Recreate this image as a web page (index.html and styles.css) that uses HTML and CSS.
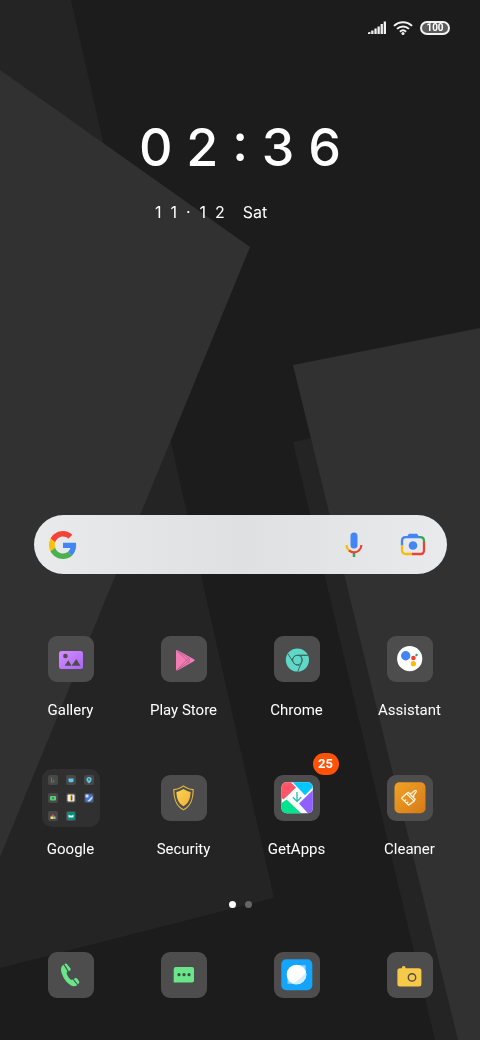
FILE: index.html
```html
<!DOCTYPE html>
<html lang="en">
<head>
    <meta charset="UTF-8">
    <meta name="viewport" content="width=device-width, initial-scale=1.0">
    <title>Home Screen</title>
    <link rel="stylesheet" href="styles.css">
</head>
<body>
    <!-- Wallpaper -->
    <svg class="wallpaper" viewBox="0 0 480 1040" preserveAspectRatio="none" aria-hidden="true">
        <rect width="480" height="1040" fill="#1c1c1c"/>
        <polygon points="0,0 71,0 274,898 0,968" fill="#242424"/>
        <polygon points="0,70 250,247 0,857" fill="#313131"/>
        <polygon points="293,442 480,402 480,1040 435,1040" fill="#242424"/>
        <polygon points="293,365 480,328 480,1040 458,1040" fill="#313131"/>
    </svg>

    <div class="screen">
        <header class="status-bar">
            <svg width="18" height="14" viewBox="0 0 18 14" fill="#f2f2f2" role="img" aria-label="Signal">
                <path d="M0 11.500l2.400-.8V13H0zM3.200 9.600h2.300V13H3.200zM6.400 7.600h2.300V13H6.400zM9.500 5.400h2.300V13H9.500zM12.600 3h2.300v10h-2.300zM15.700 0.400H18V13h-2.300z"/>
            </svg>
            <svg width="20" height="14" viewBox="0 0 20 14" fill="none" stroke="#f2f2f2" stroke-width="2" role="img" aria-label="Wi-Fi">
                <path d="M1 4.900C6-.1 14-.1 19 4.900M4 7.900c3.400-3.300 8.600-3.300 12 0M6.900 10.700c1.800-1.600 4.400-1.600 6.200 0"/>
                <circle cx="10" cy="12.400" r="1.500" fill="#f2f2f2" stroke="none"/>
            </svg>
            <span class="battery">100</span>
        </header>

        <section class="clock-widget">
            <div class="clock">
                <time class="time">0 2 : 3 6</time>
                <div class="date">1&nbsp; 1 &nbsp;· &nbsp;1&nbsp; 2 &nbsp; &nbsp;Sat</div>
            </div>
        </section>

        <form class="search">
            <svg class="google" width="28" height="28" viewBox="0 0 48 48" aria-hidden="true">
                <path fill="#4285f4" d="M46.500 24.500c0-1.600-.100-3.100-.400-4.500H24v9h12.700c-.600 2.900-2.300 5.400-4.700 7.100l7.500 5.800c4.400-4.100 7-10.100 7-17.400z"/>
                <path fill="#f44336" d="M24 9.500c3.500 0 6.700 1.200 9.200 3.600l6.800-6.800C35.900 2.400 30.500 0 24 0 14.600 0 6.500 5.400 2.600 13.200l8 6.200C12.400 13.700 17.700 9.500 24 9.500z"/>
                <path fill="#ffc107" d="M10.500 28.600c-.500-1.500-.800-3-.800-4.600s.300-3.100.800-4.600l-8-6.200C.900 16.500 0 20.100 0 24s.900 7.500 2.600 10.800z"/>
                <path fill="#4caf50" d="M24 48c6.500 0 11.900-2.100 15.900-5.800l-7.700-6c-2.200 1.500-5 2.300-8.200 2.300-6.300 0-11.600-4.200-13.500-9.900l-8 6.200C6.500 42.600 14.600 48 24 48z"/>
            </svg>
            <input type="text" class="search-input" name="q" aria-label="Search">
            <button type="button" class="search-button" aria-label="Voice search">
                <svg width="28" height="28" viewBox="0 0 28 28" fill="none" stroke-width="2.200">
                    <rect x="10.500" y="1.500" width="7" height="16" rx="3.500" fill="#4285f4"/>
                    <path d="M14 21.500V26" stroke="#34a853" stroke-width="2.500"/>
                    <path d="M6.600 14c0 2.400 1.100 4.300 2.700 5.600" stroke="#fbbc04"/>
                    <path d="M9 19.400c3 2.600 7.300 2.500 9.900.100 1.600-1.400 2.500-3.200 2.500-5.500" stroke="#ea4335"/>
                </svg>
            </button>
            <button type="button" class="search-button" aria-label="Search with camera">
                <svg width="28" height="28" viewBox="0 0 28 28" fill="none" stroke-width="2.300">
                    <path d="M8 5.500l2-2.800h8l2 2.800z" fill="#4285f4"/>
                    <path d="M3 14.500V10c0-2.200 1.600-3.800 3.800-3.800H20" stroke="#4285f4"/>
                    <path d="M20 6.200h1.200c2.200 0 3.800 1.600 3.800 3.800v1" stroke="#34a853"/>
                    <path d="M25 11v8.200c0 2.200-1.600 3.800-3.800 3.800H13" stroke="#ea4335"/>
                    <path d="M13 23H6.800C4.600 23 3 21.400 3 19.200v-4.700" stroke="#fbbc04"/>
                    <circle cx="14" cy="14.500" r="4.300" fill="#4285f4"/>
                </svg>
            </button>
        </form>

        <main class="apps">
            <a href="#" class="app">
                <span class="tile">
                    <svg viewBox="0 0 46 46">
                        <defs>
                            <linearGradient id="violet" x1="0" y1="0" x2="1" y2="1"><stop offset="0" stop-color="#d58cff"/><stop offset="1" stop-color="#aa66f5"/></linearGradient>
                        </defs>
                        <rect x="11" y="15" width="24" height="18" rx="2.500" fill="url(#violet)"/>
                        <circle cx="17.400" cy="20" r="2.300" fill="#4d4d4d"/>
                        <path d="M16.600 29.800l3.700-5.500 3.300 5.500zM23.600 29.800l4.700-6.800 4.100 6.800z" fill="#4d4d4d"/>
                    </svg>
                </span>
                <span class="label">Gallery</span>
            </a>
            <a href="#" class="app">
                <span class="tile">
                    <svg viewBox="0 0 46 46">
                        <path d="M15 15.200c0-1.200.9-1.600 1.900-1l16 9.100c1 .6 1 1.400 0 2l-16 9c-1 .6-1.900.2-1.900-1z" fill="#f27cb5"/>
                        <path d="M16 14.500l12.500 12.800M16 34l12.500-12.800M16 14.300l11.500 8c1.200.9 1.200 2.900 0 3.800l-11.500 7.900" fill="none" stroke="#9b5479" stroke-width=".6"/>
                    </svg>
                </span>
                <span class="label">Play Store</span>
            </a>
            <a href="#" class="app">
                <span class="tile">
                    <svg viewBox="0 0 46 46">
                        <circle cx="23.400" cy="24" r="11.600" fill="#60d8c8"/>
                        <g fill="none" stroke="#3f6762" stroke-width="1">
                            <circle cx="23.400" cy="24" r="4.700"/>
                            <path d="M34 19.300H23.400M13.800 17.600l5.500 8.800M23.700 35.500l3.900-9.100M23.400 19.300c-3 0-5 2.400-5 5M33.800 19.300h-6c-1.500 0-2.700.1-4.400 0M27.600 26.400c1-2.700.4-5-1.200-7.100M19.300 26.400c1.400 2.200 3.500 3.100 6.200 2.900"/>
                        </g>
                    </svg>
                </span>
                <span class="label">Chrome</span>
            </a>
            <a href="#" class="app">
                <span class="tile">
                    <svg viewBox="0 0 46 46">
                        <circle cx="22.700" cy="22.700" r="12.600" fill="#fff"/>
                        <circle cx="18.700" cy="19.700" r="4.700" fill="#4285f4"/>
                        <circle cx="26.400" cy="22" r="2.300" fill="#ea4335"/>
                        <circle cx="29.500" cy="19" r="1.200" fill="#34a853"/>
                        <circle cx="26.400" cy="27.700" r="2.600" fill="#fbbc04"/>
                    </svg>
                </span>
                <span class="label">Assistant</span>
            </a>

            <a href="#" class="app">
                <span class="folder">
                    <svg viewBox="0 0 10 10"><path d="M3.500 2.500v4.800h1.300a1.200 1.200 0 0 0 0-2.400" fill="none" stroke="#4b8a5a"/></svg>
                    <svg viewBox="0 0 10 10"><path d="M2.500 3.500h5v2.300a1.500 1.500 0 0 1-1.500 1.500H4a1.500 1.500 0 0 1-1.500-1.500z" fill="#5cc8e8"/></svg>
                    <svg viewBox="0 0 10 10"><path d="M5 8.500C3.500 7 2.400 5.800 2.400 4.500a2.600 2.600 0 0 1 5.200 0C7.600 5.800 6.500 7 5 8.500z" fill="#5cc8e8"/><circle cx="5" cy="4.500" r=".9" fill="#36546a"/></svg>
                    <svg viewBox="0 0 10 10"><rect x="2" y="3" width="6" height="4.500" rx="1" fill="#58cf7a"/><circle cx="5" cy="5.200" r="1" fill="#347a48"/></svg>
                    <svg viewBox="0 0 10 10"><rect x="1.500" y="1.500" width="7" height="7" rx="1" fill="#f1f1f1"/><path d="M4 2.500h1.500v5H4.200V4" fill="#fbbc04"/><path d="M5.200 2.500h1.200v5H5.200z" fill="#30445e"/></svg>
                    <svg viewBox="0 0 10 10"><path d="M1.500 1.500h7v7h-7z" fill="#3f77dd"/><path d="M1.500 1.500h3v3h-3zM3 8.500L8.500 3v2.500L5.500 8.500z" fill="#c9dafa"/></svg>
                    <svg viewBox="0 0 10 10"><path d="M2.500 5.500L5 3v2.500z" fill="#ea4335"/><path d="M5 3l1.500 2.500H5z" fill="#4285f4"/><path d="M2.500 5.500h2.700V8H2.500z" fill="#fbdc72"/><path d="M5.200 5.500h2.300V8H5.200z" fill="#a1bdb0"/></svg>
                    <svg viewBox="0 0 10 10"><rect x="1" y="1" width="8" height="8" rx="1" fill="#078b7d"/><path d="M2.500 6.500V3.500l1.500 1h2l1.500-1v3z" fill="#e4f6f3"/></svg>
                </span>
                <span class="label">Google</span>
            </a>
            <a href="#" class="app">
                <span class="tile">
                    <svg viewBox="0 0 46 46">
                        <defs>
                            <linearGradient id="gold" x1="0" y1="0" x2="1" y2="1"><stop offset="0" stop-color="#ffd34e"/><stop offset="1" stop-color="#eeb13c"/></linearGradient>
                        </defs>
                        <path d="M22.500 11l2.500 1.500c2 1.200 4.600 2 7.200 2.200-.2 9.300-2 16.300-9.700 20-7.700-3.700-9.500-10.700-9.700-20 2.600-.2 5.200-1 7.200-2.200z" fill="none" stroke="#e0b23f" stroke-width="1.200"/>
                        <path d="M22.500 14l1.800 1c1.700 1 3.400 1.600 5.300 2-.3 7-2 11.200-7.100 14.300-5.100-3.100-6.800-7.300-7.100-14.300 1.900-.4 3.600-1 5.300-2z" fill="url(#gold)"/>
                    </svg>
                </span>
                <span class="label">Security</span>
            </a>
            <a href="#" class="app">
                <span class="tile">
                    <svg viewBox="0 0 46 46">
                        <clipPath id="round"><rect x="7.500" y="7.300" width="31.300" height="31" rx="5"/></clipPath>
                        <g clip-path="url(#round)">
                            <rect x="7" y="7" width="32" height="32" fill="#fff"/>
                            <path d="M7 7h9.500l5.500 5.500L9.500 24.500 7 22.500z" fill="#ff5566"/>
                            <path d="M18.500 7H39v5l-8 8.300z" fill="#00c8ff"/>
                            <path d="M39 15v24h-4.500L25 28.500z" fill="#9060ff"/>
                            <path d="M7 28.500l5.500-4L28 39H7z" fill="#00e28e"/>
                        </g>
                        <path d="M23 17v9.200M18.800 22.200l4.200 4.200 4.200-4.200" fill="none" stroke="#20bcb5" stroke-width="1.300"/>
                    </svg>
                    <span class="badge">25</span>
                </span>
                <span class="label">GetApps</span>
            </a>
            <a href="#" class="app">
                <span class="tile">
                    <svg viewBox="0 0 46 46">
                        <defs>
                            <linearGradient id="amber" x1="0" y1="0" x2="1" y2="1"><stop offset="0" stop-color="#f1a323"/><stop offset="1" stop-color="#d67a19"/></linearGradient>
                        </defs>
                        <rect x="7.500" y="7.300" width="31" height="31" rx="5" fill="url(#amber)"/>
                        <g fill="none" stroke="#fff3df" stroke-width="1.300" stroke-linejoin="round">
                            <path d="M19.500 18.500l7.600 7.600-5.600 4-6.900-6.900zM19.500 18.500l1.700-1.200 6.900 7-1 1.800M22.300 18.400l2.500-.3 2.800-2.400c1-.8 2.100 0 1.500 1.200l-2.300 3.200-.3 2.700"/>
                            <path d="M17.400 26l1.800-1.500M19.600 28.200l1.700-1.500"/>
                        </g>
                    </svg>
                </span>
                <span class="label">Cleaner</span>
            </a>
        </main>

        <div class="pages">
            <span class="dot active"></span>
            <span class="dot"></span>
        </div>

        <nav class="dock">
            <a href="#" class="app" aria-label="Phone">
                <span class="tile">
                    <svg viewBox="0 0 46 46" fill="#6be58a">
                        <path d="M15.400 12.800C12.700 14.200 12.600 18 13.800 21.500c2 5.800 6 10.600 10.600 12.500 1.700.6 3.700.3 4.800-.9l-4.500-5.500c-1.500.6-2.500.2-4.500-2.800-1.600-2.500-2-4.300-.7-5.600z"/>
                        <path d="M16.300 12.100c1-.9 2-.8 2.800.1l3.200 4c.6.9.500 1.600-.2 2.200l-1.200.8zM25.700 27l1.300-.8c.8-.5 1.500-.3 2.100.4l1.800 2.300c.7 1 .4 2.200-.9 3.500z"/>
                    </svg>
                </span>
            </a>
            <a href="#" class="app" aria-label="Messages">
                <span class="tile">
                    <svg viewBox="0 0 46 46">
                        <path d="M15 15h16a2 2 0 0 1 2 2v11.500a2 2 0 0 1-2 2H12.700V17.300A2.300 2.300 0 0 1 15 15z" fill="#6be58a"/>
                        <g fill="#3d4b40"><circle cx="18" cy="22.700" r="1.600"/><circle cx="23" cy="22.700" r="1.600"/><circle cx="28" cy="22.700" r="1.600"/></g>
                    </svg>
                </span>
            </a>
            <a href="#" class="app" aria-label="Browser">
                <span class="tile">
                    <svg viewBox="0 0 46 46">
                        <rect x="7.300" y="7.300" width="31" height="31" rx="5" fill="#14a4fc"/>
                        <path d="M31.700 13.200v7L21 31.800h-7.500v-7L24 13.200z" fill="#8fd3fd"/>
                        <circle cx="22.500" cy="22.500" r="9.800" fill="#fff"/>
                        <path d="M32 20.200a9.800 9.800 0 0 1-13.500 11.200C23.500 29.200 28.500 25 32 20.200z" fill="#d3ebfb"/>
                    </svg>
                </span>
            </a>
            <a href="#" class="app" aria-label="Camera">
                <span class="tile">
                    <svg viewBox="0 0 46 46">
                        <circle cx="16.700" cy="16" r="1.900" fill="#f7c948"/>
                        <rect x="10.400" y="16.200" width="24" height="18.200" rx="2.500" fill="#f7c948"/>
                        <circle cx="25" cy="25.400" r="3.700" fill="none" stroke="#4d4d4d" stroke-width="1.400"/>
                    </svg>
                </span>
            </a>
        </nav>
    </div>
</body>
</html>
```

FILE: styles.css
```css
* {
    box-sizing: border-box;
}
body {
    margin: 0;
    background-color: #1c1c1c;
    color: #fff;
    font-family: Roboto, "Noto Sans", sans-serif;
}
.wallpaper {
    position: fixed;
    top: 0;
    left: 0;
    width: 100%;
    height: 100%;
    z-index: -1;
}
.screen {
    display: flex;
    flex-direction: column;
    min-height: 100vh;
}
.status-bar {
    display: flex;
    justify-content: flex-end;
    align-items: center;
    gap: 7px;
    padding: 21px 30px 0 0;
}
.battery {
    width: 30px;
    height: 14px;
    border: 2px solid #f2f2f2;
    border-radius: 7px;
    background-color: #5c5c5c;
    font-size: 10px;
    font-weight: bold;
    line-height: 10px;
    text-align: center;
}

/* clock */
.clock-widget {
    display: flex;
    justify-content: center;
    padding-top: 81px;
}
.time {
    display: block;
    font-family: Inter, sans-serif;
    font-size: 52px;
    font-weight: 500;
    line-height: 64px;
}
.date {
    padding: 20px 0 0 16px;
    font-family: Inter, sans-serif;
    font-size: 16px;
    line-height: 24px;
}

/* search */
.search {
    display: flex;
    align-items: center;
    height: 59px;
    margin: 291px 33px 0 34px;
    padding: 0 20px 0 15px;
    border-radius: 30px;
    background: linear-gradient(90deg, #e8eaeb, #dfe0e1 50%, #e8eaeb);
}
.search-input {
    flex: 1;
    min-width: 0;
    border: none;
    outline: none;
    background: none;
    font-size: 16px;
}
.search-button {
    padding: 0;
    border: none;
    background: none;
    line-height: 0;
    cursor: pointer;
}
.search-button + .search-button {
    margin-left: 31px;
}

/* apps */
.apps,
.dock {
    display: grid;
    grid-template-columns: repeat(4, 1fr);
    padding: 0 14px;
}
.apps {
    row-gap: 54px;
    margin-top: 62px;
}
.app {
    display: flex;
    flex-direction: column;
    align-items: center;
    color: #fff;
    text-decoration: none;
}
.tile {
    position: relative;
    width: 46px;
    height: 46px;
    border-radius: 9px;
    background-color: #4d4d4d;
}
.tile svg {
    display: block;
    width: 46px;
    height: 46px;
}
.label {
    margin-top: 17px;
    font-size: 15px;
    line-height: 22px;
}
.folder {
    display: grid;
    grid-template-columns: repeat(3, 10px);
    grid-auto-rows: 10px;
    gap: 8px;
    width: 58px;
    height: 58px;
    margin: -6px 0;
    padding: 6px;
    border-radius: 10px;
    background-color: #303030;
}
.folder svg {
    border-radius: 2px;
    background-color: #484848;
}
.badge {
    position: absolute;
    top: -22px;
    left: 39px;
    width: 26px;
    height: 22px;
    border-radius: 11px;
    background-color: #ff5208;
    font-size: 13px;
    font-weight: bold;
    line-height: 22px;
    text-align: center;
}
.pages {
    display: flex;
    justify-content: center;
    gap: 9px;
    margin-top: 41px;
}
.dot {
    width: 7px;
    height: 7px;
    border-radius: 50%;
    background-color: #666;
}
.dot.active {
    background-color: #fff;
}
.dock {
    margin-top: auto;
    padding-bottom: 42px;
}
```
